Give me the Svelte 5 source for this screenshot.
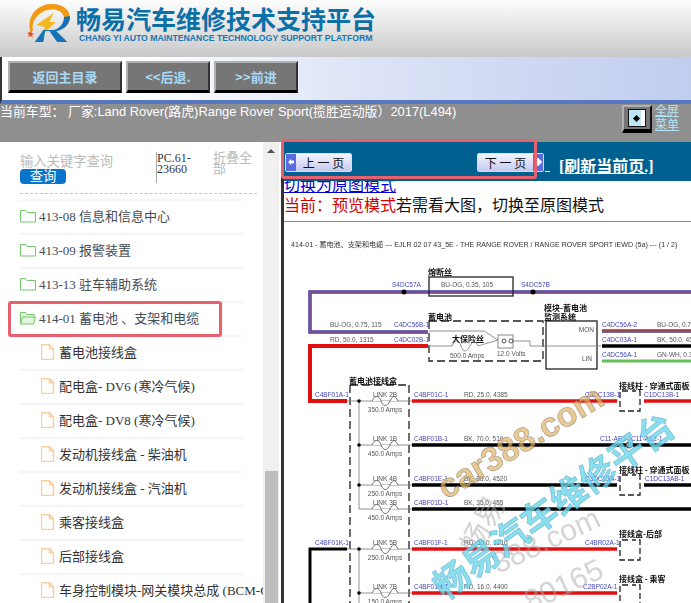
<script>
  const folders = [
    { label: '413-08 信息和信息中心' },
    { label: '413-09 报警装置' },
    { label: '413-13 驻车辅助系统' },
    { label: '414-01 蓄电池 、支架和电缆', open: true }
  ];
  const files = [
    '蓄电池接线盒',
    '配电盒- DV6 (寒冷气候)',
    '配电盒- DV8 (寒冷气候)',
    '发动机接线盒 - 柴油机',
    '发动机接线盒 - 汽油机',
    '乘客接线盒',
    '后部接线盒',
    '车身控制模块-网关模块总成 (BCM-GWM)'
  ];
  const navs = ['返回主目录', '<<后退.', '>>前进'];

  // connector labels on the wiring diagram: x, y, text
  const blue = [
    [392, 287, 'S4DC57A'], [521, 287, 'S4DC57B'], [394, 327, 'C4DC56B-1'], [394, 342, 'C4DC02B-1'],
    [602, 327, 'C4DC56A-2'], [602, 342, 'C4DC03A-1'], [602, 357, 'C4DC56A-1'],
    [315, 397, 'C4BF01A-1'], [414, 397, 'C4BF01C-1'], [585, 397, 'C3DC13B-1'], [644, 397, 'C1DC13B-1'],
    [414, 441, 'C4BF01B-1'], [600, 441, 'C11-AE1-1'], [631, 441, 'C11-AE2-1'],
    [414, 481, 'C4BF01E-1'], [585, 481, 'C3DC13A-1'], [645, 481, 'C1DC13AB-1'],
    [414, 505, 'C4BF01D-1'], [315, 545, 'C4BF01K-1'], [414, 545, 'C4BF01F-1'], [585, 545, 'C4BR02A-1'],
    [414, 589, 'C4BF01H-1'], [583, 589, 'C2BP02A-1']
  ];
  const grey = [
    [441, 287, 'BU-OG, 0.35, 105'], [330, 327, 'BU-OG, 0.75, 115'], [330, 342, 'RD, 50.0, 1315'],
    [657, 327, 'BU-OG, 0.75, 115'], [657, 342, 'BK, 50.0, 4520'], [657, 357, 'GN-WH, 0.35, 115'],
    [450, 358, '500.0 Amps'], [497, 356, '12.0 Volts'], [464, 397, 'RD, 25.0, 4385'],
    [464, 441, 'BK, 70.0, 510'], [464, 481, 'BK, 35.0, 4520'], [464, 505, 'BK, 35.0, 455'],
    [464, 545, 'RD, 35.0, 1210'], [464, 589, 'RD, 16.0, 4400']
  ];
  const heads = [
    [428, 275, '熔断丝'], [428, 320, '蓄电池'], [544, 311, '模块-蓄电池'], [544, 319.5, '监测系统'],
    [349, 384, '蓄电池接线盒'], [619, 389, '接线柱 - 穿通式面板'], [619, 473, '接线柱 - 穿通式面板'],
    [619, 537, '接线盒-后部'], [619, 582, '接线盒 - 乘客']
  ];
  const links = [
    [401, 'LINK 2B', '350.0 Amps'], [445, 'LINK 1B', '450.0 Amps'], [485, 'LINK 4B', '250.0 Amps'],
    [509, 'LINK 3B', '450.0 Amps'], [549, 'LINK 5B', '250.0 Amps'], [593, 'LINK 7B', '150.0 Amps']
  ];
  const wires = [
    ['#e01010', 412, 617, 401], ['#e01010', 644, 691, 401], ['#000', 412, 691, 445], ['#000', 412, 617, 485],
    ['#000', 644, 691, 485], ['#000', 412, 691, 509], ['#e01010', 412, 617, 549], ['#e01010', 412, 617, 593],
    ['#000', 602, 691, 346]
  ];
  const boxes = [[620, 391], [620, 475], [620, 540], [620, 585]];
</script>

<div class="page">
  <header class="brand">
    <svg class="logo" viewBox="0 0 60 50" width="60" height="50">
      <g transform="translate(1 0) scale(.86 1)">
        <path d="M12 33C5 20 16 5 34 4c14-1 24 6 23 15-1 6-7 10-13 11 6-4 8-10 5-15C45 9 34 8 25 12c-9 4-13 12-11 18z" fill="#f39a14" />
        <path d="M18 25l20-12-5 9h7L24 36l4-9z" fill="#f5b81c" />
        <path d="M57 16c0 8-7 14-16 15l13 11H42l-9-11h-5l-2 11H16l10-12h12c6-1 12-6 12-13z" fill="#1273b8" />
        <path d="M11 31l1.500 2 2.500.5-2 1.500.5 2.500-2.500-1.500-2.500 1 .5-2.500-2-1.500 2.500-.5z" fill="#e8541c" />
      </g>
    </svg>
    <div class="brand-text">
      <div class="brand-cn">畅易汽车维修技术支持平台</div>
      <div class="brand-en">CHANG YI AUTO MAINTENANCE TECHNOLOGY SUPPORT PLATFORM</div>
    </div>
  </header>

  <nav class="nav">
    {#each navs as nav, i}
      <button class="nav-btn" class:wide={i === 0}>{nav}</button>
    {/each}
  </nav>

  <div class="car">
    <span class="car-text">当前车型： 厂家:Land Rover(路虎)Range Rover Sport(揽胜运动版）2017(L494)</span>
    <div class="full">
      <span class="full-icon"><span class="full-inner"><i></i></span></span>
      <a href="#top">全屏<br />菜单</a>
    </div>
  </div>

  <div class="main">
    <aside class="side">
      <div class="tree">
        <div class="search">
          <div class="query">
            <span class="hint">输入关键字查询</span>
            <span class="query-btn">查询</span>
          </div>
          <div class="pc">PC.61-23660</div>
          <div class="fold">折叠全部</div>
        </div>
        <ul>
          {#each folders as f}
            <li class:hot={f.open}>
              <svg viewBox="0 0 16 14" width="16" height="14" class="ico">
                {#if f.open}
                  <path d="M.5 13V1.500h5l1.500 2h7v2.500M.5 13l2-7h13l-2 7z" fill="#e4f5df" stroke="#74c86a" />
                {:else}
                  <path d="M.5 13V1.500h5l1.500 2h8.500V13z" fill="#fff" stroke="#74c86a" />
                {/if}
              </svg>
              <span>{f.label}</span>
            </li>
          {/each}
          {#each files as f}
            <li class="file">
              <svg viewBox="0 0 14 16" width="14" height="16" class="ico">
                <path d="M1.500.7h7l4 4v9.800a1 1 0 0 1-1 1h-10a1 1 0 0 1-1-1v-13a1 1 0 0 1 1-.8zM8.500.7v4h4" fill="#fff" stroke="#f9cf9f" stroke-width="1.500" />
              </svg>
              <span>{f}</span>
            </li>
          {/each}
        </ul>
      </div>
      <div class="track"><span class="arrow"></span><span class="thumb"></span></div>
    </aside>

    <section class="view">
      <div class="pager">
        <button class="page-btn prev"><b></b>上 一 页</button>
        <button class="page-btn next">下 一 页<b></b></button>
        <i class="tick"></i>
        <a class="refresh" href="#top">[刷新当前页.]</a>
      </div>
      <a class="switch" href="#top">切换为原图模式</a>
      <p class="mode"><span>当前：预览模式</span>若需看大图，切换至原图模式</p>
      <svg class="diagram" viewBox="284 222 407 381" width="407" height="381">
        <text x="291" y="247" class="title">414-01 - 蓄电池、支架和电缆 --- EJLR 02 07 43_5E - THE RANGE ROVER / RANGE ROVER SPORT iEWD (5a) --- (1 / 2)</text>

        <path d="M691 292H310v40h118" fill="none" stroke="#4040b8" stroke-width="3.500" />
        <path d="M691 292H310v40h118" fill="none" stroke="#7a4f8a" stroke-width="2.500" />
        <path d="M602 331h89" stroke="#3c3cb4" stroke-width="3.500" />
        <path d="M602 331h89" stroke="#a0483c" stroke-width="1.800" />
        <path d="M428 346H310v55h37" fill="none" stroke="#e01010" stroke-width="4" />
        <path d="M602 361h89" stroke="#66c05a" stroke-width="3" />
        <path d="M347 549H310v54" fill="none" stroke="#000" stroke-width="3" />
        {#each wires as w}
          <path d="M{w[1]} {w[3]}H{w[2]}" stroke={w[0]} stroke-width="3.500" />
        {/each}

        <rect x="429" y="277" width="84" height="19" fill="none" stroke="#222" stroke-width="1.300" />
        <circle cx="404" cy="292" r="2.500" />
        <circle cx="533" cy="292" r="2.500" />
        <rect x="429" y="321" width="114" height="40" class="dash" />
        <rect x="546" y="321" width="51" height="48" fill="#fff" stroke="#222" stroke-width="1.300" />
        <text x="594" y="332" text-anchor="end" class="label">MON</text>
        <text x="592" y="361" text-anchor="end" class="label">LIN</text>
        <path d="M429 331h55l14 9M429 346h23M478 346l20-6M513 341h17v5h71" class="thin" />
        <path d="M452 346c3-7 7-7 9 0s6 6 9 0 5-6 8 0" class="thin" />
        <rect x="498" y="335" width="15" height="13" fill="#fff" stroke="#888" />
        <circle cx="504" cy="341" r="2" fill="none" stroke="#555" />
        <circle cx="511" cy="341" r="2" fill="none" stroke="#555" />
        <text x="452" y="342" class="head">大保险丝</text>

        <path d="M350 385h59M350 385V603M409 385V603" class="dash" />
        <path d="M347 401h65M347 549h65M359 445h53M359 485h53M359 509h53M359 593h53M359 401v108M359 549v54" class="thin" />
        {#each links as l}
          <path d="M372 {l[0]}c3-6 7-6 9 0s6 6 9 0 5-6 8 0" fill="#fff" stroke="#555" stroke-width=".8" />
          <text x="385" y={l[0] - 4} text-anchor="middle" class="label">{l[1]}</text>
          <text x="385" y={l[0] + 11} text-anchor="middle" class="label">{l[2]}</text>
        {/each}
        <circle cx="359" cy="401" r="1.800" />
        <circle cx="359" cy="445" r="1.800" />
        <circle cx="359" cy="485" r="1.800" />
        <circle cx="359" cy="549" r="1.800" />
        <circle cx="359" cy="593" r="1.800" />
        <circle cx="629" cy="445" r="3" fill="#7ab" stroke="#444" />

        {#each boxes as b}
          <path d="M{b[0] + 8} {b[1]}h-8v20h20v-20h-8" class="box" />
        {/each}
        {#each blue as t}
          <text x={t[0]} y={t[1]} class="code">{t[2]}</text>
        {/each}
        {#each grey as t}
          <text x={t[0]} y={t[1]} class="label">{t[2]}</text>
        {/each}
        {#each heads as t}
          <text x={t[0]} y={t[1]} class="head">{t[2]}</text>
        {/each}

        <text transform="translate(498 574) rotate(-25)" class="mark-grey">388.com</text>
        <text transform="translate(478 556) rotate(-62)" class="mark-grey">畅易</text>
        <text transform="translate(530 612) rotate(-25)" class="mark-grey">80165</text>
        <text transform="translate(446 500) rotate(-31)" class="mark-site">car388.com</text>
        <text transform="translate(445 601) rotate(-36)" class="mark-cn">畅易汽车维修平台</text>
      </svg>
    </section>
  </div>

  <span class="note left-note"></span>
  <span class="note right-note"></span>
</div>

<style>
  :global(body) {
    margin: 0;
    background: #fff;
    overflow: hidden;
  }
  .page {
    position: relative;
    width: 691px;
    height: 603px;
    overflow: hidden;
    font-family: "Liberation Sans", "Noto Sans CJK SC", sans-serif;
  }
  .brand {
    height: 57px;
    display: flex;
    padding-left: 20px;
    box-sizing: border-box;
    background: linear-gradient(#fdfdfd, #c9c9c9);
  }
  .logo {
    flex: none;
  }
  .brand-text {
    margin-left: -4px;
  }
  .brand-cn {
    color: #0b6fa8;
    font: bold 25px/25px "Noto Sans CJK SC", sans-serif;
    margin-top: 6px;
    white-space: nowrap;
  }
  .brand-en {
    color: #1478b4;
    font-size: 8.700px;
    font-weight: bold;
    margin-top: 2px;
    margin-left: 3px;
    white-space: nowrap;
  }
  .nav {
    height: 47px;
    box-sizing: border-box;
    border-left: 2px solid #333;
    border-bottom: 4px solid #5578c0;
    padding: 4px 0 0 6px;
    display: flex;
    gap: 4px;
    align-items: flex-start;
    background: linear-gradient(90deg, #fff 20%, #dfe5f7 50%, #c0cdee);
  }
  .nav-btn {
    width: 84px;
    height: 32px;
    padding: 0;
    border: 2px solid;
    border-color: #b0b0b0 #333 #000 #b0b0b0;
    border-bottom-width: 3px;
    background: #767676;
    color: #a9d8f5;
    font: bold 13px "Noto Sans CJK SC", sans-serif;
  }
  .nav-btn.wide {
    width: 114px;
  }
  .car {
    height: 38px;
    background: #8f8f8f;
    color: #fff;
    display: flex;
    justify-content: space-between;
    font-size: 12.900px;
    line-height: 14px;
    white-space: nowrap;
  }
  .car-text {
    margin-top: 1px;
  }
  .full {
    display: flex;
    gap: 3px;
    padding-right: 12px;
    font-size: 12px;
    line-height: 14px;
  }
  .full a {
    color: #b4e4f4;
  }
  .full-icon {
    width: 30px;
    height: 28px;
    box-sizing: border-box;
    background: #767676;
    border: 2px solid;
    border-color: #b0b0b0 #111 #000 #b0b0b0;
    border-bottom-width: 4px;
    padding: 2px 4px;
    margin-top: 1px;
  }
  .full-inner {
    display: flex;
    align-items: center;
    justify-content: center;
    height: 100%;
    background: linear-gradient(90deg, #bfe6f7 75%, #fff 75%);
    border: 1px solid #111;
    box-sizing: border-box;
  }
  .full-inner i {
    width: 5px;
    height: 5px;
    background: #000;
    transform: rotate(45deg);
  }
  .main {
    display: flex;
    height: 461px;
  }
  .side {
    width: 284px;
    flex: none;
    box-sizing: border-box;
    display: flex;
    border-right: 3px solid #333;
    overflow: hidden;
  }
  .tree {
    width: 263px;
    flex: none;
    box-sizing: border-box;
    padding: 0 20px;
    overflow: hidden;
  }
  .search {
    height: 52px;
    display: flex;
    border-bottom: 1px dashed #c4c4c4;
    margin-right: -14px;
    box-sizing: border-box;
    padding-top: 10px;
  }
  .query {
    width: 136px;
    flex: none;
    display: flex;
    flex-direction: column;
    align-items: flex-start;
    color: #bbb;
    font-size: 13.300px;
    line-height: 14px;
    padding-top: 3px;
  }
  .query-btn {
    width: 46px;
    height: 15px;
    border-radius: 4px;
    background: #0a75c8;
    color: #fff;
    text-align: center;
    line-height: 15px;
  }
  .pc {
    width: 57px;
    flex: none;
    height: 31px;
    border-left: 1px solid #aaa;
    font: 12px/11px "Liberation Serif", serif;
    color: #333;
    box-sizing: border-box;
    padding-top: 1px;
  }
  .fold {
    width: 40px;
    flex: none;
    color: #bbb;
    font-size: 13px;
    line-height: 11px;
  }
  ul {
    list-style: none;
    margin: 5px 0 0;
    padding: 0;
  }
  li {
    height: 34px;
    box-sizing: border-box;
    border-top: 2px solid #f5f5f5;
    padding-bottom: 3px;
    display: flex;
    align-items: center;
    gap: 3px;
    color: #444c56;
    font: 13px "Liberation Serif", "Noto Sans CJK SC", serif;
    white-space: nowrap;
  }
  li.file {
    padding-left: 21px;
    gap: 4px;
    color: #333;
  }
  .ico {
    flex: none;
  }
  .track {
    width: 16px;
    background: #f0f0f0;
  }
  .arrow {
    display: block;
    margin: 7px auto 0;
    width: 0;
    height: 0;
    border: 4px solid transparent;
    border-top: 0;
    border-bottom-color: #505050;
  }
  .thumb {
    display: block;
    margin-top: 318px;
    margin-left: 2px;
    width: 13px;
    height: 140px;
    background: #bdbdbd;
  }
  .view {
    flex: 1;
    min-width: 0;
    overflow: hidden;
  }
  .pager {
    position: relative;
    z-index: 1;
    height: 39px;
    box-sizing: border-box;
    background: #00608f;
    display: flex;
    align-items: center;
    padding: 2px 0 0 1px;
  }
  .page-btn {
    position: relative;
    height: 19px;
    width: 67px;
    padding: 0;
    box-sizing: border-box;
    border: 1px solid #d8def8;
    border-radius: 2px;
    background: linear-gradient(#f4f5fe, #c4caf0);
    color: #111;
    font: 12px "Noto Sans CJK SC", sans-serif;
  }
  .page-btn b {
    position: absolute;
    top: 0;
    bottom: 0;
    width: 10px;
    background: #5a6ae0;
  }
  .page-btn b::after {
    content: "";
    position: absolute;
    top: 5px;
    left: 2px;
    width: 6px;
    height: 6px;
    background: #fff;
  }
  .prev b::after {
    clip-path: polygon(0 50%, 50% 0, 50% 25%, 100% 25%, 100% 75%, 50% 75%, 50% 100%);
  }
  .next b::after {
    transform: rotate(45deg);
  }
  .prev {
    padding-left: 10px;
  }
  .prev b {
    left: 0;
  }
  .next {
    margin-left: 125px;
    padding-right: 10px;
  }
  .next b {
    right: 0;
  }
  .tick {
    width: 5px;
    height: 1px;
    background: #fff;
    margin: 18px 0 0 1px;
  }
  .refresh {
    margin: 5px 0 0 9px;
    color: #fff;
    font: bold 16px "Liberation Serif", "Noto Sans CJK SC", serif;
    white-space: nowrap;
  }
  .switch {
    display: block;
    height: 16px;
    margin-top: -5px;
    color: #0000cc;
    font: 16px/16px "Noto Sans CJK SC", sans-serif;
  }
  .mode {
    margin: 0;
    height: 30px;
    box-sizing: border-box;
    border-bottom: 1px solid #888;
    font: 16px/24px "Noto Sans CJK SC", sans-serif;
    color: #111;
    white-space: nowrap;
  }
  .mode span {
    color: #d40000;
  }
  .diagram {
    display: block;
    filter: blur(.3px);
  }
  .title {
    font: 7.100px "Liberation Sans", "Noto Sans CJK SC", sans-serif;
    fill: #333;
  }
  .label {
    font: 6.500px "Liberation Sans", sans-serif;
    fill: #555;
  }
  .code {
    font: 6.500px "Liberation Sans", sans-serif;
    fill: #4444b8;
  }
  .head {
    font: bold 8px "Noto Sans CJK SC", sans-serif;
    fill: #111;
  }
  .thin {
    fill: none;
    stroke: #777;
    stroke-width: .8;
  }
  .dash {
    fill: none;
    stroke: #222;
    stroke-width: 1.300;
    stroke-dasharray: 8 4;
  }
  .box {
    fill: #fff;
    stroke: #222;
    stroke-width: 1.300;
    stroke-dasharray: 6 3;
  }
  .mark-grey {
    font: 30px "Liberation Sans", "Noto Sans CJK SC", sans-serif;
    fill: rgba(170, 170, 170, .5);
  }
  .mark-site {
    font: bold 34px "Liberation Sans", sans-serif;
    fill: rgba(225, 180, 100, .7);
    stroke: rgba(90, 90, 90, .55);
    stroke-width: .6;
  }
  .mark-cn {
    font: bold 36px "Noto Sans CJK SC", sans-serif;
    fill: rgba(110, 215, 232, .8);
    stroke: rgba(60, 150, 200, .6);
    stroke-width: .6;
  }
  .note {
    position: absolute;
    z-index: 2;
    box-sizing: border-box;
    border: 3px solid #e8606e;
    border-radius: 3px;
    pointer-events: none;
  }
  .left-note {
    left: 8px;
    top: 301px;
    width: 214px;
    height: 36px;
  }
  .right-note {
    left: 281px;
    top: 139px;
    width: 256px;
    height: 40px;
  }
</style>
